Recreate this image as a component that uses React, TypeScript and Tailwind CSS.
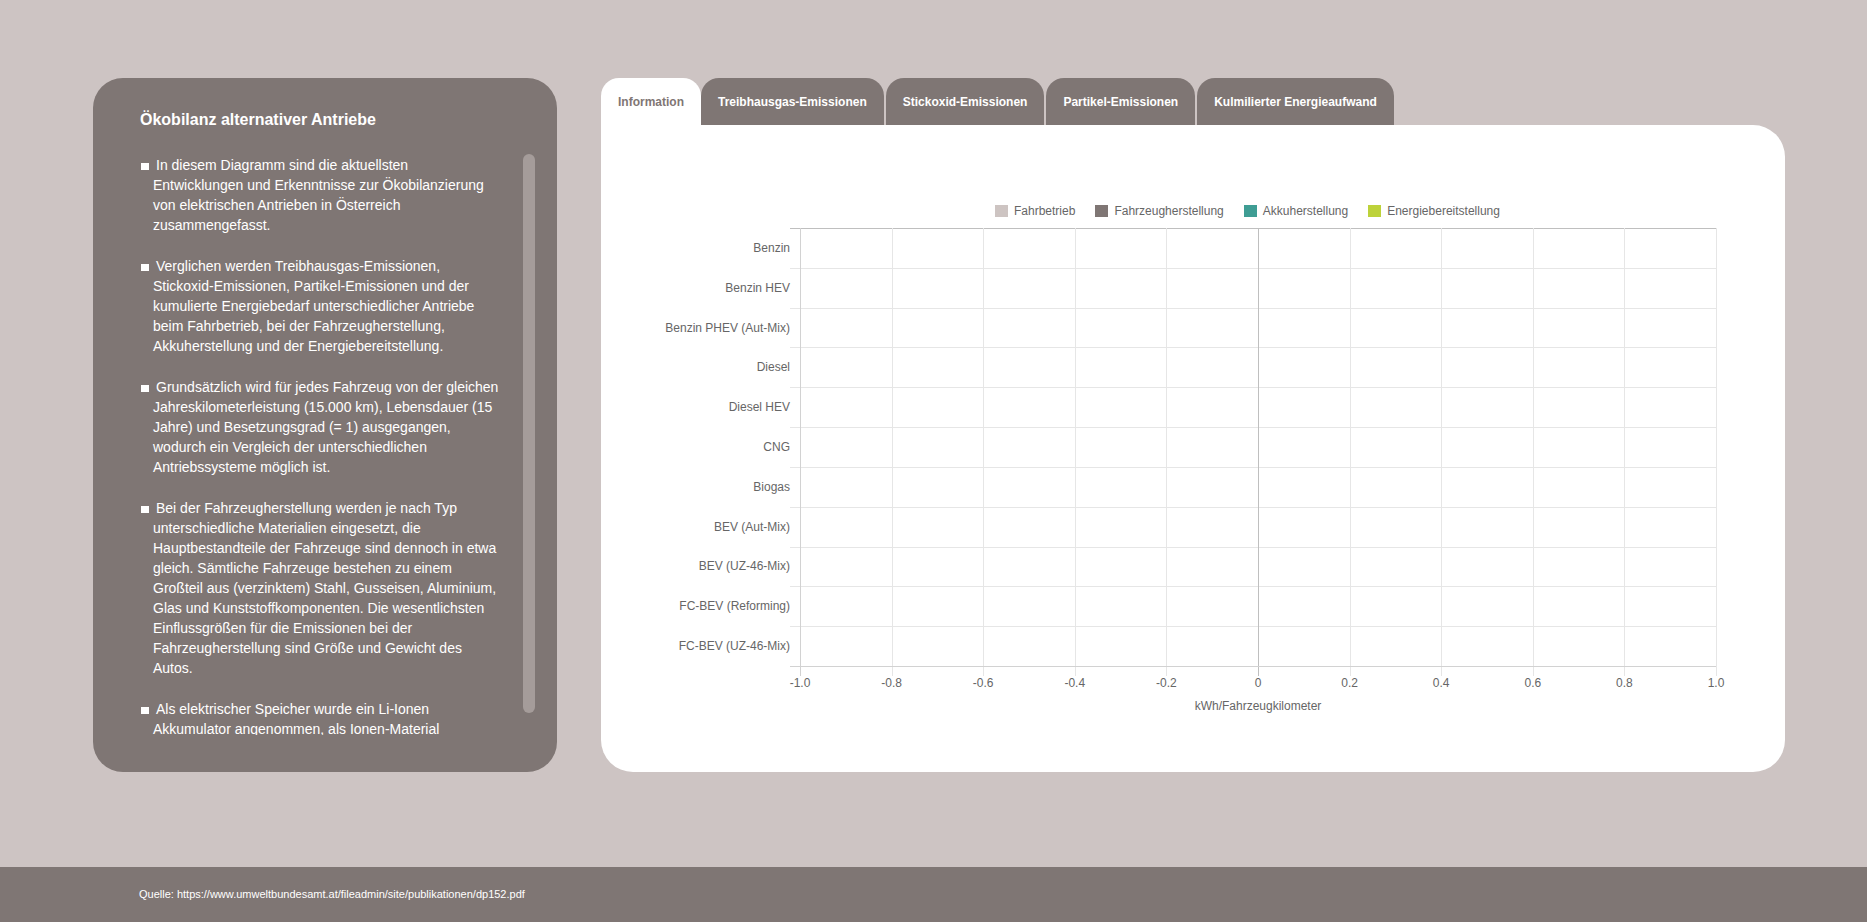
import type { ReactNode } from "react";

const paragraphs: ReactNode[] = [
  "In diesem Diagramm sind die aktuellsten Entwicklungen und Erkenntnisse zur Ökobilanzierung von elektrischen Antrieben in Österreich zusammengefasst.",
  "Verglichen werden Treibhausgas-Emissionen, Stickoxid-Emissionen, Partikel-Emissionen und der kumulierte Energiebedarf unterschiedlicher Antriebe beim Fahrbetrieb, bei der Fahrzeugherstellung, Akkuherstellung und der Energiebereitstellung.",
  "Grundsätzlich wird für jedes Fahrzeug von der gleichen Jahreskilometerleistung (15.000 km), Lebensdauer (15 Jahre) und Besetzungsgrad (= 1) ausgegangen, wodurch ein Vergleich der unterschiedlichen Antriebssysteme möglich ist.",
  "Bei der Fahrzeugherstellung werden je nach Typ unterschiedliche Materialien eingesetzt, die Hauptbestandteile der Fahrzeuge sind dennoch in etwa gleich. Sämtliche Fahrzeuge bestehen zu einem Großteil aus (verzinktem) Stahl, Gusseisen, Aluminium, Glas und Kunststoffkomponenten. Die wesentlichsten Einflussgrößen für die Emissionen bei der Fahrzeugherstellung sind Größe und Gewicht des Autos.",
  <>
    Als elektrischer Speicher wurde ein Li-Ionen Akkumulator angenommen, als Ionen-Material{" "}
    <span className="whitespace-nowrap">Lithium-Nickel-Mangan-Cobalt-Oxid</span> (NMC).
  </>,
];

const tabs = [
  "Information",
  "Treibhausgas-Emissionen",
  "Stickoxid-Emissionen",
  "Partikel-Emissionen",
  "Kulmilierter Energieaufwand",
];

const legend = [
  { label: "Fahrbetrieb", color: "bg-[#cdc4c2]" },
  { label: "Fahrzeugherstellung", color: "bg-[#7f7674]" },
  { label: "Akkuherstellung", color: "bg-[#3f9d94]" },
  { label: "Energiebereitstellung", color: "bg-[#bdd23a]" },
];

const categories = [
  "Benzin",
  "Benzin HEV",
  "Benzin PHEV (Aut-Mix)",
  "Diesel",
  "Diesel HEV",
  "CNG",
  "Biogas",
  "BEV (Aut-Mix)",
  "BEV (UZ-46-Mix)",
  "FC-BEV (Reforming)",
  "FC-BEV (UZ-46-Mix)",
];

const ticks = ["-1.0", "-0.8", "-0.6", "-0.4", "-0.2", "0", "0.2", "0.4", "0.6", "0.8", "1.0"];

// plot box in page coordinates
const LEFT = 800;
const RIGHT = 1716;
const TOP = 228;
const BOTTOM = 666;

function Chart() {
  const rowH = (BOTTOM - TOP) / categories.length;
  const colW = (RIGHT - LEFT) / (ticks.length - 1);
  const px = (v: number) => Math.round(v) + 0.5;

  return (
    <svg width={1184} height={500} viewBox="601 222 1184 500" className="block">
      {categories.map((_, i) => (
        <line
          key={"h" + i}
          x1={790}
          x2={RIGHT}
          y1={px(TOP + i * rowH)}
          y2={px(TOP + i * rowH)}
          stroke={i === 0 ? "#bfbfbf" : "#e6e6e6"}
          strokeWidth={1}
        />
      ))}
      {ticks.map((_, j) => (
        <line
          key={"v" + j}
          x1={px(LEFT + j * colW)}
          x2={px(LEFT + j * colW)}
          y1={TOP}
          y2={BOTTOM + 10}
          stroke={j === 5 ? "#bfbfbf" : j === 0 ? "#d2d2d2" : "#e6e6e6"}
          strokeWidth={1}
        />
      ))}
      <line x1={790} x2={RIGHT} y1={px(BOTTOM)} y2={px(BOTTOM)} stroke="#d2d2d2" strokeWidth={1} />
      <g fill="#666666" fontSize={12} fontFamily="'Liberation Sans', Arial, sans-serif">
        {categories.map((c, i) => (
          <text key={c} x={790} y={TOP + rowH * (i + 0.5) + 4} textAnchor="end">
            {c}
          </text>
        ))}
        {ticks.map((t, j) => (
          <text key={t} x={LEFT + j * colW} y={687} textAnchor="middle">
            {t}
          </text>
        ))}
        <text x={1258} y={710} textAnchor="middle">
          kWh/Fahrzeugkilometer
        </text>
      </g>
    </svg>
  );
}

export default function App() {
  return (
    <div className="min-h-screen flex flex-col bg-[#cdc4c3] font-['Liberation_Sans',Arial,sans-serif]">
      <main className="flex-1 flex items-start pt-[78px] pl-[93px]">
        <section className="w-[464px] h-[694px] rounded-[30px] bg-[#7f7674] pt-[32px] pl-[47px] text-white overflow-hidden">
          <h1 className="text-[16px] leading-[20px] font-bold">Ökobilanz alternativer Antriebe</h1>
          <div className="mt-[24px] flex items-start">
            <div className="w-[361px] h-[581px] overflow-hidden pt-[1px]">
              {paragraphs.map((p, i) => (
                <p key={i} className="pl-[13px] mb-[21px] text-[14px] leading-[20px]">
                  <span className="inline-block w-[8px] h-[7px] bg-white -ml-[12px] mr-[7px]" />
                  {p}
                </p>
              ))}
            </div>
            <div className="ml-[22px] w-[12px] h-[559px] rounded-full bg-[#a59c9a]" />
          </div>
        </section>

        <section className="ml-[44px] w-[1184px]">
          <div className="flex h-[47px]">
            {tabs.map((t, i) => (
              <div
                key={t}
                className={
                  i === 0
                    ? "h-full px-[17px] flex items-center rounded-t-[18px] bg-white text-[#7f7674] text-[12px] font-bold"
                    : i === 1
                      ? "h-full px-[17px] flex items-center rounded-t-[18px] bg-[#7f7674] text-white text-[12px] font-bold"
                      : "ml-[2px] h-full px-[17px] flex items-center rounded-t-[18px] bg-[#7f7674] text-white text-[12px] font-bold"
                }
              >
                {t}
              </div>
            ))}
          </div>
          <div className="h-[647px] bg-white rounded-tr-[32px] rounded-b-[32px] pt-[78px]">
            <div className="ml-[394px] h-[16px] flex items-center gap-[20px] text-[12px] text-[#666666]">
              {legend.map((l) => (
                <div key={l.label} className="flex items-center">
                  <span className={`w-[13px] h-[12px] mr-[6px] ${l.color}`} />
                  {l.label}
                </div>
              ))}
            </div>
            <div className="mt-[3px]">
              <Chart />
            </div>
          </div>
        </section>
      </main>
      <footer className="h-[55px] bg-[#7f7674] flex items-center pl-[139px] text-[11px] text-white">
        Quelle: https://www.umweltbundesamt.at/fileadmin/site/publikationen/dp152.pdf
      </footer>
    </div>
  );
}
